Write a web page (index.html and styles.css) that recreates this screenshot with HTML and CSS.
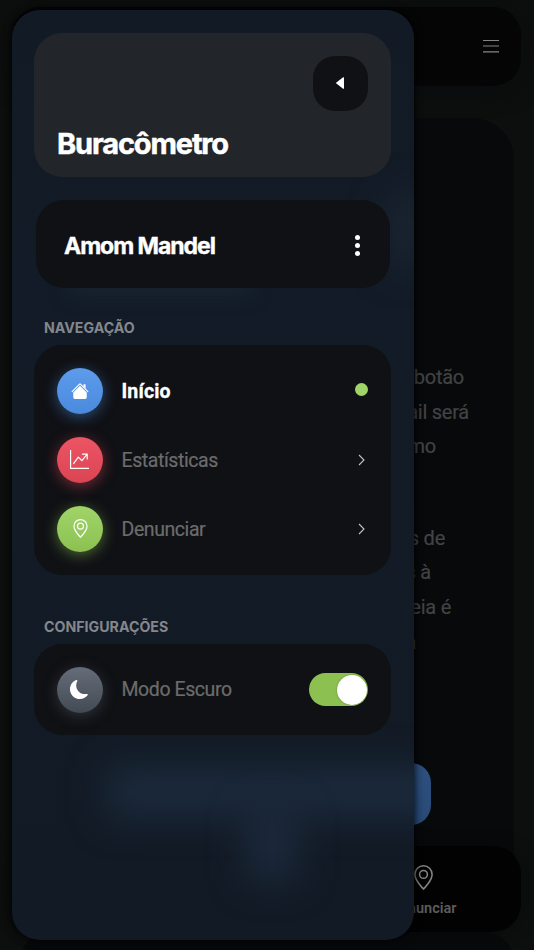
FILE: index.html
```html
<!DOCTYPE html>
<html lang="pt-BR">
<head>
<meta charset="utf-8">
<meta name="viewport" content="width=device-width, initial-scale=1">
<title>Buracômetro</title>
<link rel="stylesheet" href="styles.css">
</head>
<body>
<div class="page">
  <header class="topbar">
    <svg class="menu-icon" viewBox="0 0 16 14" fill="none" stroke="currentColor" stroke-width="1.2"><path d="M0 1.500h16M0 7h16M0 12.900h16"/></svg>
  </header>
  <main class="article">
    <div class="paragraph first">
      <p class="line r-botao">botão</p>
      <p class="line r-sera">e-mail será</p>
      <p class="line r-mo">como</p>
    </div>
    <div class="paragraph second">
      <p class="line r-de">buracos de</p>
      <p class="line r-crase">mais à</p>
      <p class="line r-ideia">ideia é</p>
      <p class="line r-a">a</p>
    </div>
    <div class="cta"></div>
  </main>
  <section class="next-card"></section>
  <nav class="tabbar">
    <a class="tab">
      <svg class="tab-pin" viewBox="0 0 16 16" fill="currentColor"><path d="M12.166 8.94c-.524 1.062-1.234 2.12-1.96 3.07A32 32 0 0 1 8 14.58a32 32 0 0 1-2.206-2.57c-.726-.95-1.436-2.008-1.96-3.07C3.304 7.867 3 6.862 3 6a5 5 0 0 1 10 0c0 .862-.305 1.867-.834 2.94M8 16s6-5.686 6-10A6 6 0 0 0 2 6c0 4.314 6 10 6 10"/><path d="M8 8a2 2 0 1 1 0-4 2 2 0 0 1 0 4m0 1a3 3 0 1 0 0-6 3 3 0 0 0 0 6"/></svg>
      <span>Denunciar</span>
    </a>
  </nav>
</div>

<aside class="drawer">
  <div class="glow glow-bar"></div>
  <div class="glow glow-drop"></div>
  <div class="glow glow-side"></div>
  <div class="glow glow-line"></div>
  <div class="drawer-body">
    <div class="hero">
      <button class="back" aria-label="Fechar"><svg viewBox="0 0 8 12" fill="#fff"><path d="M7.1.3C7.600 0 8 .2 8 .8v10.400c0 .6-.4.8-.9.5L.4 6.600a.8.8 0 0 1 0-1.200z"/></svg></button>
      <h1>Buracômetro</h1>
    </div>
    <div class="user">
      <h2>Amom Mandel</h2>
      <span class="dots"><i></i><i></i><i></i></span>
    </div>
    <h3 class="nav-title">NAVEGAÇÃO</h3>
    <div class="group">
      <a class="row active">
        <span class="circle blue"><svg viewBox="0 0 16 16" fill="#fff"><path d="m8 3.293 6 6V13.500a1.500 1.500 0 0 1-1.500 1.500h-9A1.500 1.500 0 0 1 2 13.500V9.293z"/><path d="M13 2.500V6l-2-2V2.500a.5.500 0 0 1 .5-.5h1a.5.500 0 0 1 .5.500"/><path d="M7.293 1.500a1 1 0 0 1 1.414 0l6.647 6.646a.5.500 0 0 1-.708.708L8 2.207 1.354 8.854a.5.500 0 1 1-.708-.708z"/></svg></span>
        <span class="label">Início</span>
        <span class="status"></span>
      </a>
      <a class="row">
        <span class="circle red"><svg class="chart" viewBox="0 0 16 16" fill="#fff"><path d="M0 0h1v15h15v1H0zm10 3.500a.5.500 0 0 1 .5-.5h4a.5.500 0 0 1 .5.500v4a.5.500 0 0 1-1 0V4.900l-3.613 4.417a.5.500 0 0 1-.74.037L7.060 6.767l-3.656 5.027a.5.500 0 0 1-.808-.588l4-5.500a.5.500 0 0 1 .758-.06l2.609 2.610L13.445 4H10.500a.5.500 0 0 1-.5-.5"/></svg></span>
        <span class="label">Estatísticas</span>
        <svg class="chevron" viewBox="0 0 7 12"><path d="m1 1 5 5-5 5"/></svg>
      </a>
      <a class="row">
        <span class="circle green"><svg class="pin" viewBox="0 0 16 16" fill="#fff"><path d="M12.166 8.940c-.524 1.062-1.234 2.120-1.960 3.070A32 32 0 0 1 8 14.580a32 32 0 0 1-2.206-2.570c-.726-.95-1.436-2.008-1.960-3.070C3.304 7.867 3 6.862 3 6a5 5 0 0 1 10 0c0 .862-.305 1.867-.834 2.940M8 16s6-5.686 6-10A6 6 0 0 0 2 6c0 4.314 6 10 6 10"/><path d="M8 8a2 2 0 1 1 0-4 2 2 0 0 1 0 4m0 1a3 3 0 1 0 0-6 3 3 0 0 0 0 6"/></svg></span>
        <span class="label">Denunciar</span>
        <svg class="chevron" viewBox="0 0 7 12"><path d="m1 1 5 5-5 5"/></svg>
      </a>
    </div>
    <h3 class="config-title">CONFIGURAÇÕES</h3>
    <div class="group">
      <div class="row">
        <span class="circle gray"><svg class="moon" viewBox="0 0 16 16" fill="#fff"><path d="M6 .278a.77.77 0 0 1 .080.858 7.200 7.200 0 0 0-.878 3.460c0 4.021 3.278 7.277 7.318 7.277q.792-.001 1.533-.160a.79.790 0 0 1 .810.316.730.730 0 0 1-.031.893A8.350 8.350 0 0 1 8.344 16C3.734 16 0 12.286 0 7.710 0 4.266 2.114 1.312 5.124.060A.75.750 0 0 1 6 .278"/></svg></span>
        <span class="label">Modo Escuro</span>
        <span class="toggle"><i></i></span>
      </div>
    </div>
  </div>
</aside>
</body>
</html>
```
FILE: styles.css
```css
* { box-sizing: border-box; }
html, body { margin: 0; height: 100%; overflow: hidden; }
body { background: #0c0f0d; font-family: Roboto, "Liberation Sans", sans-serif; }
h1, h2, h3, p { margin: 0; }

.page { position: relative; height: 950px; padding: 7px 13px 0 12px; overflow: hidden; }
.topbar { display: flex; align-items: center; justify-content: flex-end; height: 79px; padding-right: 22px; border-radius: 28px; background: #050505; box-shadow: 0 4px 24px #0c0b0f; }
.menu-icon { width: 16px; height: 14px; margin-bottom: 1px; color: #858585; }
.article { height: 800px; margin: 32px 7px 0 8px; border-radius: 42px; background: #07090b; padding-top: 242px; overflow: hidden; }
.line { color: #434343; font-size: 20px; line-height: 34.6px; letter-spacing: -.25px; white-space: nowrap; text-align: right; -webkit-text-stroke: .2px #434343; }
.second { margin-top: 57px; }
.r-botao { padding-right: 50px; }
.r-sera { padding-right: 45px; }
.r-mo { padding-right: 78px; }
.r-de { padding-right: 69px; }
.r-crase { padding-right: 83px; }
.r-ideia { padding-right: 63px; }
.r-a { padding-right: 98px; }
.cta { width: 331px; height: 62px; margin: 104px 0 0 80px; border-radius: 20px; background: linear-gradient(#2e5080, #284a76); }
.next-card { height: 60px; margin: 14px 7px 0 8px; border-radius: 42px; background: #07090b; }
.tabbar { position: absolute; left: 12px; right: 13px; top: 846px; height: 86px; display: flex; justify-content: flex-end; padding-right: 64.500px; border-radius: 28px; background: #020202; box-shadow: 0 0 16px rgba(9,8,11,.6); }
.tab { display: flex; flex-direction: column; align-items: center; padding-top: 18.500px; font-size: 14.5px; font-weight: 600; line-height: 18px; color: #5c5c5c; }
.tab-pin { width: 25px; height: 25px; margin-bottom: 10.500px; color: #858585; }

.drawer { position: absolute; left: 12px; top: 10px; width: 402px; height: 930px; border-radius: 28px; overflow: hidden; background: linear-gradient(#121a26, #121b27 30%, #121a25); box-shadow: 0 0 10px #000; }
.drawer-body { position: relative; padding: 23px 23px 0 22px; }
.glow { position: absolute; filter: blur(18px); }
.glow-bar { left: 95px; top: 756px; width: 340px; height: 52px; background: #1b2a3c; }
.glow-drop { left: 235px; top: 800px; width: 50px; height: 70px; background: #1c2a3d; }
.glow-side { left: 378px; top: 184px; width: 40px; height: 72px; background: #1b2632; }
.glow-line { left: 58px; top: 268px; width: 180px; height: 14px; background: #1c2935; filter: blur(10px); }

.hero { display: flex; flex-direction: column; height: 144px; padding: 23px 23px 0; border-radius: 28px; background: #222529; }
.back { flex: none; align-self: flex-end; display: flex; align-items: center; justify-content: center; width: 55px; height: 55px; padding: 0; border: 0; border-radius: 22px; background: #101115; }
.back svg { width: 8px; height: 12px; margin: 0 1px 1px 0; }
h1 { margin-top: 14px; font: 700 29px/38px Inter, sans-serif; letter-spacing: -1.15px; color: #fff; -webkit-text-stroke: .5px #fff; }
.user { display: flex; align-items: center; justify-content: space-between; height: 87.500px; margin: 23px 1.500px 0; padding: 4px 30px 0 28.500px; border-radius: 28px; background: #101115; }
h2 { font: 700 23px/32px Inter, sans-serif; letter-spacing: -1.03px; color: #fff; -webkit-text-stroke: .4px #fff; }
.dots { display: flex; flex-direction: column; gap: 3px; }
.dots i { width: 5px; height: 5px; border-radius: 50%; background: #fff; }
h3 { padding-left: 10px; font: 700 14.200px/20px Inter, sans-serif; letter-spacing: 0; color: #84878b; }
.nav-title { margin: 30px 0 7.500px; }
.config-title { margin: 42px 0 7px; }
.group { display: flex; flex-direction: column; gap: 23px; padding: 23px 23px 22.500px; border-radius: 28px; background: #101115; }
.row { display: flex; align-items: center; height: 46px; }
.circle { display: flex; align-items: center; justify-content: center; width: 46px; height: 46px; margin-right: 18.500px; border-radius: 50%; }
.circle svg { width: 18px; height: 18px; margin-bottom: 1px; }
.circle .chart { width: 19px; height: 19px; margin-right: 1px; }
.circle .pin { width: 19px; height: 19px; margin-bottom: 2px; }
.circle .moon { width: 19px; height: 19px; margin-right: 1px; }
.blue { background: linear-gradient(#5d9cec, #4a89dc); box-shadow: 0 3px 14px rgba(74,137,220,.5); }
.red { background: linear-gradient(#ed5565, #da4453); box-shadow: 0 3px 14px rgba(218,68,83,.5); }
.green { background: linear-gradient(#a0d468, #8cc152); box-shadow: 0 3px 14px rgba(140,193,82,.5); }
.gray { background: linear-gradient(#656d78, #434a54); box-shadow: 0 3px 14px rgba(67,74,84,.6); }
.label { flex: 1; font-size: 19.500px; letter-spacing: -.42px; color: #6c6c6c; -webkit-text-stroke: .2px #6c6c6c; }
.active .label { font-weight: 700; letter-spacing: .15px; color: #fff; -webkit-text-stroke: .3px #fff; }
.status { width: 13px; height: 13px; margin: 0 0 3px 0; border-radius: 50%; background: #a0d468; }
.chevron { width: 7px; height: 12px; margin: 0 3px 1px 0; fill: none; stroke: #c3c3c5; stroke-width: 1.100; }
.toggle { display: flex; justify-content: flex-end; width: 59px; height: 33px; padding: 1.500px; border-radius: 17px; background: #8cc152; }
.toggle i { width: 30px; height: 30px; border-radius: 50%; background: #fff; box-shadow: 0 0 2px rgba(0,0,0,.35); }
```
